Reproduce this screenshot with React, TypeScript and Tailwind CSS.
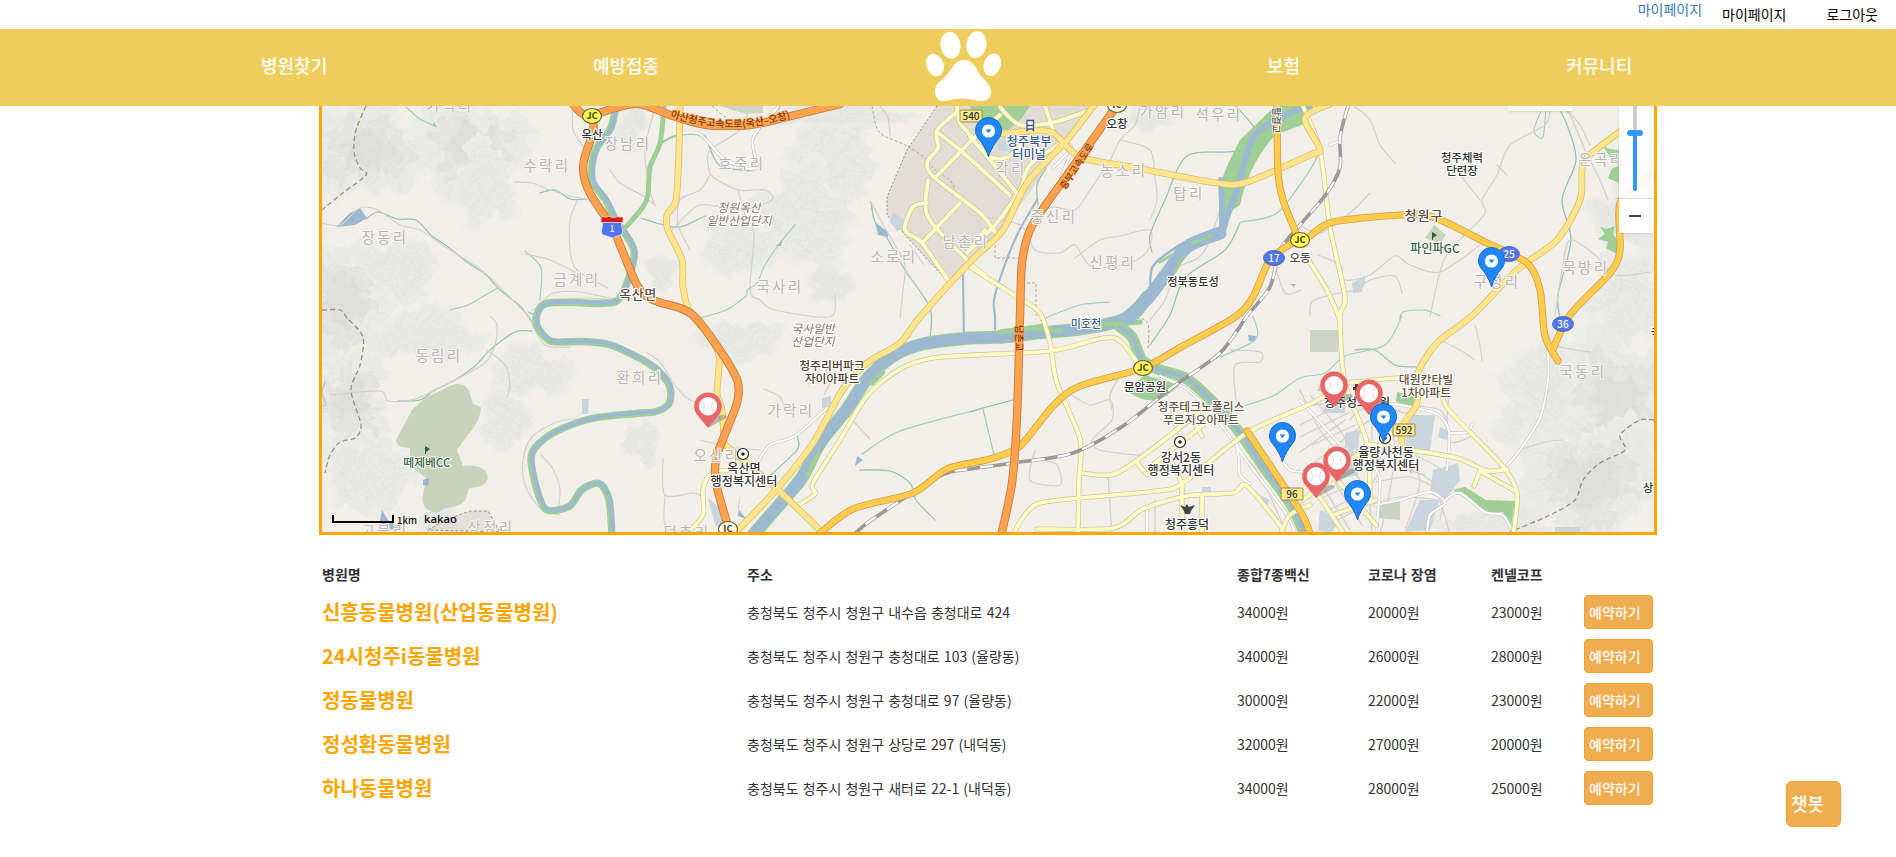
import React from "react";

type Pt = [number, number];

const villages: [string, number, number][] = [
  ["가덕리", 449, 106], ["장남리", 627, 144], ["수락리", 546, 166], ["장동리", 384, 238], ["금계리", 576, 280],
  ["호죽리", 741, 164], ["국사리", 779, 287], ["소로리", 893, 257], ["남촌리", 965, 242], ["각리", 1010, 169],
  ["농소리", 1123, 171], ["가암리", 1162, 112], ["석우리", 1218, 115], ["탑리", 1188, 194], ["중신리", 1053, 217],
  ["신평리", 1112, 263], ["은곡리", 1601, 160], ["묵방리", 1585, 268], ["구성리", 1496, 282], ["국동리", 1582, 372],
  ["동림리", 438, 356], ["환희리", 639, 378], ["가락리", 790, 411], ["오산리", 716, 456], ["상정리", 490, 528],
  ["고북리", 384, 531], ["덕촌리", 686, 533],
];

type Label = { t: string[]; x: number; y: number; c?: string; s?: number; i?: boolean; ls?: number };
const labels: Label[] = [
  { t: ["옥산"], x: 592, y: 134, s: 11.5 },
  { t: ["옥산면"], x: 638, y: 294, s: 13, ls: 0.6, c: "#5a4b44" },
  { t: ["청원옥산", "일반산업단지"], x: 739, y: 214, i: true, c: "#88706c", s: 11.8 },
  { t: ["국사일반", "산업단지"], x: 813, y: 335, i: true, c: "#88706c", s: 11.8 },
  { t: ["청주북부", "터미널"], x: 1029, y: 148, c: "#345a90", s: 12.2 },
  { t: ["오창"], x: 1117, y: 123, s: 11.5 },
  { t: ["정북동토성"], x: 1193, y: 281, s: 11.2 },
  { t: ["오동"], x: 1300, y: 257, s: 11.5, c: "#5a4b44" },
  { t: ["청주체력", "단련장"], x: 1462, y: 164, s: 11.4 },
  { t: ["청원구"], x: 1424, y: 215, s: 13, ls: 1, c: "#5a4b44" },
  { t: ["파인파GC"], x: 1435, y: 248, c: "#34663d", s: 12 },
  { t: ["떼제베CC"], x: 427, y: 462, c: "#34663d", s: 11.8 },
  { t: ["청주리버파크", "자이아파트"], x: 832, y: 372, c: "#4c4033", s: 11.9 },
  { t: ["옥산면", "행정복지센터"], x: 744, y: 475, s: 12.1 },
  { t: ["미호천"], x: 1086, y: 323, c: "#40648b", s: 11 },
  { t: ["문암공원"], x: 1145, y: 386, s: 11.4 },
  { t: ["청주테크노폴리스", "푸르지오아파트"], x: 1201, y: 413, c: "#63533f", s: 11.8 },
  { t: ["강서2동", "행정복지센터"], x: 1181, y: 464, s: 12.1 },
  { t: ["청주흥덕"], x: 1187, y: 524, s: 12 },
  { t: ["청주성모병원"], x: 1357, y: 402, s: 12 },
  { t: ["대원칸타빌", "1차아파트"], x: 1426, y: 386, c: "#63533f", s: 11.8 },
  { t: ["율량사천동", "행정복지센터"], x: 1386, y: 459, s: 12.1 },
  { t: ["상"], x: 1648, y: 487, s: 11.5 },
  { t: ["국"], x: 1656, y: 332, s: 11.5 },
];

/* cx, cy, rx, ry, seed, shade */
const hills: [number, number, number, number, number, number][] = [
  [370, 150, 75, 50, 1, 1], [470, 145, 65, 48, 2, 1], [485, 185, 30, 45, 13, 0], [345, 300, 48, 70, 3, 1],
  [400, 270, 40, 32, 4, 0], [350, 400, 42, 55, 5, 1], [425, 335, 60, 28, 6, 0], [530, 372, 46, 26, 7, 0],
  [505, 420, 26, 32, 8, 0], [370, 475, 50, 38, 9, 0], [629, 133, 15, 22, 10, 0], [835, 150, 44, 60, 11, 0],
  [800, 220, 55, 52, 12, 0], [738, 245, 40, 32, 14, 0], [662, 272, 16, 20, 15, 0], [740, 340, 46, 20, 16, 0],
  [642, 443, 20, 22, 17, 0], [1625, 215, 34, 36, 18, 0], [1625, 300, 40, 50, 19, 0], [1550, 400, 60, 50, 20, 0],
  [1615, 400, 65, 75, 21, 1], [1590, 480, 78, 68, 22, 1], [1545, 385, 30, 55, 23, 0], [1500, 525, 62, 20, 24, 0],
  [830, 115, 85, 12, 25, 0], [830, 285, 25, 20, 26, 0], [1150, 117, 24, 14, 27, 0], [638, 118, 8, 14, 28, 0],
  [440, 520, 22, 14, 31, 0],
];

function blob(cx: number, cy: number, rx: number, ry: number, seed: number, k: number) {
  const pts: string[] = [];
  const n = 160;
  for (let i = 0; i < n; i++) {
    const a = (i / n) * Math.PI * 2;
    const r = k * (0.9 + 0.14 * Math.sin(a * 3 + seed) + 0.12 * Math.sin(a * 5 + seed * 2.3));
    const x = cx + Math.cos(a) * rx * r;
    const y = cy + Math.sin(a) * ry * r;
    const m = Math.min(1, Math.min(rx, ry) / 40);
    const wx = 5 * Math.sin(y * 0.24 + seed) + 3.2 * Math.sin(y * 0.55 + x * 0.2) + 1.6 * Math.sin(y * 1.1 + seed * 3);
    const wy = 5 * Math.sin(x * 0.22 + seed * 1.7) + 3.2 * Math.sin(x * 0.5 - y * 0.25) + 1.6 * Math.sin(x * 1.05 + seed);
    pts.push(`${(x + wx * m).toFixed(1)},${(y + wy * m).toFixed(1)}`);
  }
  return pts.join(" ");
}

/* Catmull-Rom through the points, written as cubic segments */
function curve(s: string) {
  const p = s.split(" ").map((q) => q.split(",").map(Number) as Pt);
  let d = `M${p[0][0]} ${p[0][1]}`;
  for (let i = 0; i < p.length - 1; i++) {
    const a = p[i - 1] || p[i];
    const b = p[i];
    const c = p[i + 1];
    const e = p[i + 2] || c;
    d += `C${b[0] + (c[0] - a[0]) / 7} ${b[1] + (c[1] - a[1]) / 7} ${c[0] - (e[0] - b[0]) / 7} ${c[1] - (e[1] - b[1]) / 7} ${c[0]} ${c[1]}`;
  }
  return d;
}

const leftRiver =
  "617,105 612,127 598,147 593,165 594,182 607,200 617,220 628,236 635,250 633,267 625,290 617,301 600,303 577,302 553,302 542,306 537,318 540,329 553,341 583,341 610,344 643,359 660,371 671,387 670,403 657,411 637,413 593,418 557,431 537,446 532,459 537,486 547,509 570,506 583,489 600,483 610,499 613,535";
const miho =
  "1147,297 1135,313 1120,321 1080,329 1037,333 1003,337 970,338 923,344 893,356 867,379 847,409 820,443 803,476 787,496 753,535";
const mihoUp = "1310,106 1285,115 1255,135 1243,167 1237,190 1227,217 1220,233 1187,247 1167,273 1147,299";
const musim = "1120,327 1132,337 1142,360 1157,369 1187,379 1217,406 1237,429 1263,466 1290,503 1305,535";

const streams = [
  "366,219 378,212 397,219 416,220 432,236 447,246 468,263 485,274 500,290 520,306 532,322",
  "498,288 482,297 468,305 450,310", "532,331 515,332 490,350 475,366 455,380 435,390 420,400 398,401",
  "406,107 420,119 435,126", "540,193 555,190 570,199 586,199", "525,251 541,268 540,300",
  "705,135 718,164 741,170 754,168 754,138 780,107", "795,225 780,243 765,265 757,283 747,290 746,296 726,310 700,318",
  "871,202 875,222 887,238 905,270 930,308 930,340", "963,275 964,342", "641,218 660,224 680,227 705,216",
  "682,135 700,136 725,160 740,168", "1235,105 1258,135 1235,151 1187,156 1165,200 1150,235 1152,252",
  "1241,222 1277,213 1310,170 1320,150", "1240,223 1225,250 1185,278 1170,315 1150,345", "980,409 900,431 862,454",
  "860,470 890,471 910,483 916,500 935,520", "1220,412 1250,404 1275,395 1300,378 1325,373 1345,356 1385,345 1402,316",
  "1355,350 1375,350 1395,365 1417,367", "1546,105 1543,137 1534,130 1545,102", "1557,105 1567,125 1576,160 1562,200 1571,240 1558,295 1560,318",
  "1400,320 1403,312 1425,310 1440,316", "970,412 983,408 1013,400", "983,409 994,455", "797,436 797,450 765,480", "1253,316 1255,340 1203,364",
  "1046,168 1037,185 1038,205", "1045,318 1080,305 1110,302", "535,315 528,312", "325,382 322,393 326,405 322,405",
];

const minor = [
  "322,223 340,225 360,208 378,210 400,225 420,230 447,248 485,273 530,318", "540,305 553,293 580,292 610,298 640,300",
  "532,310 560,300 590,298 611,300", "577,201 570,220 570,250 577,270 608,288", "514,182 532,183 550,190 574,197 588,199",
  "610,170 620,183 645,197 655,205", "573,106 573,130 585,150 590,165", "525,254 550,260 575,272",
  "330,395 380,391 388,401 415,399 455,380 485,363 495,345 497,325 490,316", "487,350 505,365 510,385 507,397",
  "530,320 545,345 570,347", "655,206 650,190 645,150 655,108", "708,164 712,176 738,190 765,190 772,200 740,210 700,205 672,230",
  "710,175 700,190 680,200 678,225 690,250", "738,190 745,215 754,235 750,290 760,300 775,310 830,317 835,295",
  "750,107 740,130 710,150 708,165", "871,202 885,228 895,245 905,265 903,290 900,318", "910,245 924,265",
  "600,418 560,421 532,437 523,460 525,485 540,508 560,515", "541,455 553,469 560,490 558,510", "646,352 660,362 675,385 690,400 716,406",
  "663,458 665,495 694,493 705,500", "665,495 664,520 670,534", "700,440 730,447 760,450", "757,463 770,445 795,436 827,408",
  "764,389 780,397 785,410", "820,360 830,380 824,395", "843,410 870,439", "920,342 980,334 1030,332", "880,106 888,118 890,135",
  "1140,106 1135,125 1120,140 1110,160 1090,190 1075,210 1052,207 1037,218", "1120,140 1150,150 1155,178 1157,200 1150,220",
  "970,215 1020,225 1035,250 1060,253 1075,245 1092,267 1130,263 1148,250 1150,230 1120,236 1100,240 1075,258", "1295,107 1270,118 1235,170 1205,250 1178,268 1165,300 1150,320",
  "1355,107 1370,120 1380,145 1395,163", "1550,107 1545,125 1510,145 1497,175 1482,200 1484,215 1450,250 1440,272 1430,316",
  "1370,193 1350,213 1320,233 1300,225", "1318,255 1340,265 1345,280 1370,275 1395,256 1410,265 1440,272 1480,245",
  "1310,316 1312,302 1330,295 1355,290 1370,280 1395,276 1402,293", "1460,175 1480,200", "1497,165 1507,175", "1560,107 1570,115 1585,150 1600,180 1608,200",
  "1565,107 1580,125 1590,145", "1555,316 1562,270 1570,240 1595,255 1615,275 1650,272", "1230,350 1260,352 1260,362 1235,365 1236,400", "1301,290 1285,293 1273,260",
  "1073,396 1090,405 1110,400 1112,420 1092,440 1100,450 1140,455 1150,450", "1035,450 1030,480 1060,485 1057,465 1043,460", "1120,375 1110,395 1112,410",
  "1108,475 1112,535", "1238,450 1260,475 1285,530", "1155,500 1155,535", "1170,405 1175,430 1190,440",
  "1350,420 1360,410 1380,405 1400,412 1430,418", "1305,406 1350,400", "1310,395 1340,430 1348,445", "1300,425 1335,408 1360,400",
  "1300,390 1320,430 1345,460 1360,480", "1305,470 1370,420 1400,410", "1300,452 1345,420", "1325,475 1365,445",
  "1370,470 1400,467 1430,480 1440,500 1450,535", "1375,482 1410,477 1440,490", "1380,450 1380,470 1370,490 1372,535",
  "1390,420 1395,450 1390,490 1380,535", "1400,450 1420,480 1405,530", "1415,455 1445,475 1440,520", "1370,505 1400,497 1440,500",
  "1318,500 1350,485", "1325,512 1365,492", "1330,524 1370,503", "1325,490 1350,530", "1335,483 1362,525",
  "1350,437 1365,430", "1300,437 1350,412", "1312,445 1355,425", "1372,415 1372,440", "1385,410 1388,440",
  "1450,380 1448,440 1475,435", "1405,440 1400,465 1425,475", "1520,450 1545,442 1563,440", "1475,325 1480,345 1482,361", "1440,340 1460,350 1475,360",
  "1550,345 1575,350 1590,352", "1450,433 1440,410 1400,405",
];

const whiteRoads = [
  "682,133 700,134 722,157 745,168 757,166 753,138 778,107", "757,463 770,445 795,436 827,408", "1548,350 1548,380 1540,418 1520,450 1505,468",
  "1160,376 1185,388 1205,406 1225,430 1250,465 1285,512 1296,535", "1237,445 1239,460 1240,475 1250,484",
  "1375,403 1400,405 1437,414 1449,432 1447,470", "1449,433 1468,432 1472,424", "1375,505 1400,500 1430,492 1445,503 1430,515 1427,535",
  "1445,500 1460,493 1485,512 1503,515 1512,530", "1147,510 1147,535", "1372,465 1380,480 1376,535", "1282,460 1290,470 1305,472", "1300,400 1345,450",
  "1053,168 1071,148 1062,145 1045,165", "1062,175 1072,150", "1330,145 1340,141",
];

const pale = [
  "980,355 933,358 900,369 867,396 840,440 813,483 815,494 797,506", "970,355 1050,351 1103,338 1120,341 1140,366",
  "970,267 1017,297 1040,313 1050,343 1057,383 1080,439 1079,480 1078,535", "1082,473 1117,473 1173,433 1203,409",
  "1013,535 1020,522 1037,504 1080,498 1157,491 1183,483 1247,433 1310,404 1335,390", "1037,529 1113,528 1143,509 1187,496 1233,493 1247,486 1283,529",
  "1182,483 1182,535", "1202,496 1202,535", "1168,455 1182,483", "1137,462 1147,474 1158,470", "1203,425 1150,467", "1173,433 1190,420 1202,436",
  "1303,106 1320,150 1330,227 1345,297 1340,317 1345,383 1367,443 1370,503", "1305,255 1327,290 1340,320", "1367,444 1403,449 1457,458 1487,471 1507,469",
  "1347,383 1400,378 1437,383 1448,409 1500,463 1517,493 1513,535", "1480,471 1515,491", "1480,471 1474,486", "1295,505 1330,480 1367,445", "1315,490 1345,535",
  "1333,475 1376,525", "1333,515 1376,500", "1280,535 1290,515 1310,505",
  "957,106 960,123 970,135 1020,197", "957,112 937,130 938,148 927,163 935,178 980,213 995,232", "937,132 960,150 1010,195", "935,178 980,132 1000,115",
  "928,180 928,217 970,263 985,275", "927,203 913,207 905,230 922,243 950,283", "922,243 960,203", "967,253 985,230", "970,137 990,157 1008,157 1020,145",
  "1066,140 1030,165 1020,190 995,225 970,250", "1000,107 1020,125 1055,122 1090,110", "1045,106 1053,130", "728,470 710,475 703,490 703,515 688,532",
];

const yellow = [
  "680,106 679,150 676,200 667,215 668,230 682,260 683,287 690,313 707,333 719,356 717,393 722,410 724,440",
  "1095,104 1067,140 1027,183 1003,230 970,262 920,317 900,343 867,363 843,389 813,443 777,489 735,533",
  "1003,134 1030,131 1053,133 1080,157 1137,168 1217,183 1247,182 1310,155 1320,149 1305,118 1330,104",
  "1630,124 1587,157 1582,170 1580,200 1557,240 1517,270 1473,315 1437,343 1418,373 1417,403 1403,426 1402,453",
  "723,443 777,489 825,535",
];

const amber = [
  "1277,105 1278,173 1283,200 1297,235", "1310,236 1333,222 1400,215 1433,217 1487,243 1527,263 1540,290 1545,336 1558,361",
  "1656,172 1621,200 1620,250 1610,273 1570,315 1553,349", "1297,240 1270,260 1253,297 1235,317 1183,346 1143,368 1080,386 1053,406 1020,446 990,459 947,469 913,493 853,509 818,535",
  "1247,431 1277,476 1303,516 1312,540",
];

const orange = [
  "573,104 580,112 592,120 593,132 584,160 584,177 592,197 612,227 622,250 638,287 653,300 680,308 694,316 710,336 730,366 738,383 737,403 723,439 716,459 716,483 729,530",
  "592,116 615,108 640,104 673,116 707,125 750,125 787,117 840,104",
  "1118,104 1083,153 1047,203 1030,230 1022,263 1020,316 1017,416 1012,483 1001,536",
];

const rail =
  "1348,106 1340,137 1340,167 1327,193 1300,225 1280,250 1270,287 1247,316 1220,353 1170,389 1123,426 1073,453 1013,463 970,469 940,476 873,519 853,535";

const parcels = [
  "966,235 976,242 970,252 959,244", "893,212 905,220 898,232 890,222", "1005,140 1014,140 1014,151 998,151 998,143", "1352,283 1365,276 1365,283 1362,292 1353,293",
  "1410,415 1435,415 1430,450 1405,450", "1345,433 1360,430 1358,450 1345,448", "1325,455 1353,448 1358,475 1335,480", "1433,470 1458,463 1460,480 1445,500 1430,494",
  "1420,500 1440,500 1430,530 1405,532", "1320,510 1340,520 1330,535 1318,530", "1260,495 1270,500 1266,508", "708,498 722,510 725,530 715,525", "1555,527 1580,527 1580,535 1555,535",
  "582,399 589,399 588,414 582,414", "822,398 831,396 831,408 822,408", "1202,487 1211,487 1211,494 1202,494", "1325,404 1345,400 1345,413 1323,413", "1440,427 1448,430 1446,440 1438,437",
];

function Strokes({ list, w, c, cap = "round" }: { list: string[]; w: number; c: string; cap?: "round" | "butt" }) {
  return (
    <g fill="none" stroke={c} strokeWidth={w} strokeLinecap={cap} strokeLinejoin="round">
      {list.map((s) => (
        <path key={s} d={curve(s)} />
      ))}
    </g>
  );
}

function Shield({ x, y, n }: { x: number; y: number; n: string }) {
  return (
    <g>
      <ellipse cx={x} cy={y} rx="10.5" ry="7.5" fill="#5276e8" stroke="#3f57b5" strokeWidth="0.8" />
      <text x={x} y={y + 3.6} fontSize="10" fontWeight="500" textAnchor="middle" fill="#fff">{n}</text>
    </g>
  );
}

function Plate({ x, y, n }: { x: number; y: number; n: string }) {
  return (
    <g>
      <rect x={x - 11} y={y - 6} width="22" height="12" rx="1" fill="#f8e98c" stroke="#a88c3d" />
      <text x={x} y={y + 3.7} fontSize="10" fontWeight="500" textAnchor="middle" fill="#333">{n}</text>
    </g>
  );
}

function Junction({ x, y, white, t = "JC" }: { x: number; y: number; white?: boolean; t?: string }) {
  return (
    <g>
      <ellipse cx={x} cy={y} rx="9.5" ry="7.5" fill={white ? "#fffbe8" : "#fcf951"} stroke="#6d633c" strokeWidth="1.2" />
      <text x={x} y={y + 3.4} fontSize="9.5" fontWeight="700" textAnchor="middle" fill="#4a4028">{t}</text>
    </g>
  );
}

function Office({ x, y }: { x: number; y: number }) {
  return (
    <g>
      <circle cx={x} cy={y} r="5.5" fill="#fff" stroke="#222" strokeWidth="1.2" />
      <circle cx={x} cy={y} r="1.8" fill="#222" />
    </g>
  );
}

function Flag({ x, y }: { x: number; y: number }) {
  return <path d={`M${x} ${y + 8}V${y}L${x + 5} ${y + 3}L${x + 1} ${y + 6}V${y + 8}Z`} fill="#2b6134" />;
}

function BluePin({ x, y }: { x: number; y: number }) {
  return (
    <g transform={`translate(${x} ${y})`}>
      <path d="M0 0C-1.2-5-3-8-7-14.500C-10-18.500-13-21-13-26.500A13 13 0 0 1 13-26.500C13-21 10-18.500 7-14.500C3-8 1.200-5 0 0Z" fill="#1f87f8" stroke="#1667c4" strokeWidth="1" />
      <circle cy="-26" r="6.600" fill="#fff" />
      <path d="M-3-27.500H3L0-23.800Z" fill="#1f87f8" />
    </g>
  );
}

function RedPin({ x, y }: { x: number; y: number }) {
  return (
    <g transform={`translate(${x} ${y})`}>
      <path d="M0 0L18-10C22-14 10-14 6-10Z" fill="#5b6b5b" opacity=".4" />
      <path d="M0 0L-11.500-14A13.800 13.800 0 1 1 11.500-14Z" fill="#e96667" />
      <circle cy="-21.700" r="9.200" fill="#fff" />
      <path d="M-6.300-28C-2.800-24-2.800-19-6.300-15.500M6.300-28C2.800-24 2.800-19 6.300-15.500" fill="none" stroke="#efb5b5" strokeWidth="1" strokeDasharray="1.500 1" />
    </g>
  );
}

function MapCanvas() {
  return (
    <svg viewBox="322 106 1332 426" className="block h-[426px] w-[1332px]">
      <rect x="322" y="106" width="1332" height="426" fill="#f2efe9" />
      {hills.map(([cx, cy, rx, ry, s, dark]) => (
        <g key={s}>
          <polygon points={blob(cx, cy, rx, ry, s, 1.08)} fill="#edede8" />
          <polygon points={blob(cx, cy, rx, ry, s, 0.94)} fill="#eaebe6" stroke="#e5e7e2" strokeWidth=".7" />
          <polygon points={blob(cx, cy, rx, ry, s, 0.8)} fill="none" stroke="#e2e4df" strokeWidth=".8" />
          <polygon points={blob(cx, cy, rx, ry, s, 0.66)} fill={dark ? "#e3e4df" : "#e9eae5"} stroke="#dfe2dd" strokeWidth=".8" />
          <polygon points={blob(cx, cy, rx, ry, s, 0.52)} fill="none" stroke={dark ? "#ebece8" : "#e1e4df"} strokeWidth=".8" />
          <polygon points={blob(cx, cy, rx, ry, s, 0.38)} fill={dark ? "#dedfda" : "none"} stroke="#dfe1dc" strokeWidth=".8" />
          <polygon points={blob(cx, cy, rx, ry, s, 0.22)} fill="none" stroke="#e2e4df" strokeWidth=".8" />
        </g>
      ))}

      <path d="M937 106L907 150L887 197V215L950 284L1003 230L1067 140L1093 106Z" fill="#e1ddd5" />
      <path d="M937 106L907 150L887 197V215L950 284" fill="none" stroke="#9a8a78" strokeDasharray="2 2" />
      <path d="M970 106H1030L1022 118L1008 130L980 128Z" fill="#9fce96" />
      <path d="M450 386C458 382 468 384 470 394L473 404L481 407C480 425 468 433 457 450L463 466C480 464 490 470 487 481C482 488 476 486 468 489C468 504 458 507 445 508L437 513C425 511 421 504 423 495L426 478L410 465V448C402 448 396 446 396 440L412 410L425 398Z" fill="#c8d3bc" />
      <path d="M720 106H763V113L745 114Z" fill="#cdd6c2" />
      <path d="M428 530L445 520L470 511H488L500 532Z" fill="#e2ded8" stroke="#a08f7a" strokeDasharray="3 2" />
      <path d="M1310 330H1338V352H1310Z" fill="#cfd5c4" />
      <path d="M1425 238L1434 225L1446 235L1440 243Z" fill="#c8d3bc" />
      <path d="M1320 385L1335 380V393L1317 391Z" fill="#c5d1bb" />
      <path d="M1378 502H1400V520L1378 518Z" fill="#c9d3c2" />
      <path d="M1127 390C1140 402 1157 404 1170 393L1180 385L1145 375Z" fill="#9fce96" />
      <path d="M1397 392L1415 396L1413 406L1396 402Z" fill="#9fce96" />
      <path d="M1453 490L1465 487L1486 500L1515 501L1511 528L1503 512L1485 512Z" fill="#9fce96" />
      <path d="M1603 146L1610 149L1619 150V183L1608 178L1612 168L1619 166L1612 160ZM1600 227L1607 229L1615 226L1613 234L1617 240V254L1606 248L1608 242L1598 239L1605 234Z" fill="#9fce96" />
      <path d="M1407 464H1416L1411 474Z" fill="#9fce96" />
      {parcels.map((p) => (
        <polygon key={p} points={p} fill="#cad6de" />
      ))}
      <path d="M360 208L367 218L355 225L336 227L350 213ZM434 122L437 127L433 126ZM875 222L888 232V237L878 235ZM776 246L783 239L781 246ZM423 480L429 478L428 486L423 485ZM382 510L388 520L400 528L378 532ZM1248 335L1256 336L1255 341L1249 341ZM1290 284L1296 284L1294 287ZM857 456L863 460L855 466ZM740 494L738 508L746 519L738 516Z" fill="#9cb9d1" />

      <Strokes list={streams} w={1.2} c="#a3cfb8" />
      <Strokes list={streams.filter((_, i) => i % 2 === 0)} w={0.6} c="#8fb4c0" />
      <Strokes list={["1037,200 1018,233 1003,270 994,300 995,316 995,330"]} w={2.2} c="#9cb9d1" />
      <Strokes list={["963,275 964,342"]} w={2} c="#9cb9d1" />
      <Strokes list={minor} w={1.2} c="#d2d0ce" />
      <g fill="none" stroke="#9a9176" strokeWidth="1.300" strokeDasharray="5 3">
        <path d={curve("366,106 356,130 354,152 360,168 366,175 340,195 322,210")} />
        <path d={curve("322,310 340,310 347,318 363,337 360,365 351,390 361,425 355,438 340,442 330,455 325,473")} />
        <path d={curve("1654,420 1640,420 1620,435 1625,450 1600,463 1583,480 1575,500 1550,515 1510,532")} />
      </g>
      <g fill="none" stroke="#b5a893" strokeDasharray="3 2">
        <path d={curve("712,106 730,120 755,126")} />
        <path d={curve("872,106 879,132 905,145 925,158 935,170 950,180 955,190")} />
        <path d="M995 240V258H1020V283H1036V316" />
        <path d={curve("1040,320 1060,335 1100,320 1145,320 1148,350")} />
      </g>

      <g transform="translate(-1 0.500)">
        <Strokes list={[leftRiver]} w={7.4} c="#9fce96" />
      </g>
      <Strokes list={[leftRiver]} w={4} c="#9cb9d1" />
      <Strokes list={["626,227 643,207 648,195 650,167 660,143 664,107"]} w={5} c="#9fce96" />
      <Strokes list={["660,144 672,137 682,135"]} w={2} c="#9fce96" />
      <path d="M1310 106H1275L1240 140C1230 160 1218 180 1220 200L1225 215L1240 205C1248 170 1262 150 1275 135L1310 122Z" fill="#9fce96" />
      <Strokes list={[miho]} w={13} c="#9fce96" />
      <Strokes list={[miho]} w={11} c="#9cb9d1" />
      <Strokes list={["1045,326 1000,332", "1140,322 1090,326", "1060,331 1035,329", "883,372 872,383", "818,455 808,475"]} w={5} c="#9fce96" />
      <Strokes list={[mihoUp]} w={6} c="#9cb9d1" />
      <Strokes list={["1220,233 1187,247 1167,273 1147,299 1125,320"]} w={13} c="#9cb9d1" />
      <Strokes list={["1221,180 1222,205 1222,230"]} w={6} c="#9cb9d1" />
      <Strokes list={["1210,237 1190,240 1165,255 1152,268 1150,290"]} w={2.5} c="#9cb9d1" />
      <Strokes list={["1212,236 1192,243", "1160,262 1172,255", "1182,258 1175,272"]} w={3} c="#9fce96" />
      <Strokes list={[musim]} w={11} c="#9fce96" />
      <Strokes list={[musim]} w={4.5} c="#9cb9d1" />

      <Strokes list={whiteRoads} w={3.2} c="#c9c7c5" />
      <Strokes list={whiteRoads} w={2} c="#ffffff" />
      <Strokes list={pale} w={5.2} c="#cbc7a4" />
      <Strokes list={pale} w={3.7} c="#fffbc6" />
      <Strokes list={yellow} w={6.8} c="#d9bd70" />
      <Strokes list={yellow} w={5.2} c="#ffe68c" />
      <Strokes list={[rail]} w={3.6} c="#999999" cap="butt" />
      <path d={curve(rail)} fill="none" stroke="#fff" strokeWidth="2.200" strokeDasharray="13 13" />
      <Strokes list={amber} w={7.2} c="#cba050" />
      <Strokes list={amber} w={5.6} c="#ffcb4b" />
      <Strokes list={orange} w={8.4} c="#bd8048" />
      <Strokes list={orange} w={6.6} c="#ffa14d" />

      <g textAnchor="middle" paintOrder="stroke" stroke="#f6f4f0" strokeWidth="2" strokeLinejoin="round">
        {villages.map(([t, x, y]) => (
          <text key={t} x={x + 1} y={y + 5} fontSize="14.500" letterSpacing="2.400" fill="#b7b7b7">{t}</text>
        ))}
      </g>
      <g textAnchor="middle" paintOrder="stroke" stroke="#fff" strokeWidth="2.200" strokeLinejoin="round">
        {labels.map((l) => (
          <text key={l.t[0] + l.x} fontSize={l.s} fontStyle={l.i ? "italic" : "normal"} fontWeight={l.i ? 400 : 500} letterSpacing={l.ls ?? 0} fill={l.c ?? "#333"}>
            {l.t.map((s, i) => (
              <tspan key={s} x={l.x} y={l.y + (i - (l.t.length - 1) / 2) * 13.6 + 4.5}>{s}</tspan>
            ))}
          </text>
        ))}
      </g>
      <defs>
        <path id="road-a" d="M670 117Q735 138 792 117" />
        <path id="road-b" d="M1065 190L1101 135" />
      </defs>
      <g fontSize="10" fontWeight="500" fill="#7a3d12" paintOrder="stroke" stroke="#ffa14d" strokeWidth="1.500">
        <text><textPath href="#road-a">아산청주고속도로(옥산–오창)</textPath></text>
        <text fontSize="9.500"><textPath href="#road-b">중부고속도로</textPath></text>
        <text transform="translate(1016 325) rotate(90)" fontSize="9.500">남촌교</text>
        <text transform="translate(1273 107) rotate(90)" fontSize="9.500" fill="#555" stroke="#fff">팔결교</text>
      </g>

      <Junction x={592} y={116} />
      <Junction x={1143} y={368} />
      <Junction x={1300} y={240} />
      <Junction x={728} y={529} white t="IC" />
      <Junction x={1117} y={105} white t="IC" />
      <path d="M601 223V218C603 215 605 219 609 216C612 218 615 218 618 216C619 219 622 215 623 218V223Z" fill="#d51c12" stroke="#fff" strokeWidth=".6" />
      <path d="M602 222.500H622C620 226 625 231 621 235Q617 236 612 238Q607 236 603 235C599 231 604 226 602 222.500Z" fill="#5276e8" stroke="#fff" strokeWidth=".6" />
      <text x="612" y="232" fontSize="9" textAnchor="middle" fill="#fff">1</text>
      <Shield x={1274} y={258} n="17" />
      <Shield x={1509} y={254} n="25" />
      <Shield x={1563} y={324} n="36" />
      <Plate x={971} y={116} n="540" />
      <Plate x={1292} y={494} n="96" />
      <Plate x={1404} y={430} n="592" />
      <Office x={743} y={454} />
      <Office x={1180} y={442} />
      <Office x={1385} y={438} />
      <Flag x={425} y={446} />
      <Flag x={1432} y={232} />
      <path d="M1027 120.500H1033.500V129H1027ZM1027 125.500H1033.500M1026.500 131L1028 129M1034 131L1032.500 129" fill="#fff" stroke="#345a90" strokeWidth="1.300" />
      <path d="M1180 505L1185 507L1187 504L1189 507L1195 505L1191 511L1190 514H1185L1184 511Z" fill="#444" />
      <path d="M1353 387H1360V390H1353ZM1355 384H1358V395H1355Z" fill="#444" />

      <RedPin x={708} y={428} />
      <RedPin x={1334} y={407} />
      <RedPin x={1369} y={415} />
      <RedPin x={1337} y={482} />
      <RedPin x={1316} y={498} />
      <BluePin x={988.5} y={157} />
      <BluePin x={1491.5} y={287} />
      <BluePin x={1282.5} y={462} />
      <BluePin x={1383.5} y={443} />
      <BluePin x={1357.5} y={520} />

      <path d="M333 515V522H393V515" fill="none" stroke="#000" strokeWidth="2" />
      <text x="397" y="524" fontSize="9.500" fontWeight="500" fill="#111">1km</text>
      <text x="424" y="523" fontSize="11.500" fontWeight="600" fill="#111" fontFamily="'Open Sans', sans-serif" textLength="33" lengthAdjust="spacingAndGlyphs">kakao</text>
    </svg>
  );
}

const hospitals = [
  ["신흥동물병원(산업동물병원)", "충청북도 청주시 청원구 내수읍 충청대로 424", "34000원", "20000원", "23000원"],
  ["24시청주i동물병원", "충청북도 청주시 청원구 충청대로 103 (율량동)", "34000원", "26000원", "28000원"],
  ["정동물병원", "충청북도 청주시 청원구 충청대로 97 (율량동)", "30000원", "22000원", "23000원"],
  ["정성환동물병원", "충청북도 청주시 청원구 상당로 297 (내덕동)", "32000원", "27000원", "20000원"],
  ["하나동물병원", "충청북도 청주시 청원구 새터로 22-1 (내덕동)", "34000원", "28000원", "25000원"],
];

const rowGrid = "grid grid-cols-[425px_490px_131px_123px_93px_69px] items-center pl-[3px] [word-spacing:1px]";

export default function App() {
  return (
    <div className="relative h-[857px] overflow-hidden bg-white font-['Noto_Sans_CJK_KR',sans-serif] text-sm text-[#333]">
      <div className="flex h-[29px] items-start justify-end pr-[18px] leading-[18px]">
        <a className="mr-5 text-[#337ab7]">마이페이지</a>
        <a className="mr-10 mt-[5px] text-black">마이페이지</a>
        <a className="mt-[5px] text-black">로그아웃</a>
      </div>

      <nav className="grid h-[77px] grid-cols-[332px_333px_340px_300px_1fr] items-center bg-[#efcd5c] pb-[5px] pl-[261px] text-lg font-medium text-white">
        <a>병원찾기</a>
        <a>예방접종</a>
        <svg viewBox="926 31 75 70" className="mt-[2px] h-[70px] w-[75px]" fill="#fff">
          <ellipse cx="935" cy="65" rx="8.500" ry="11.500" transform="rotate(-20 935 65)" />
          <ellipse cx="950.500" cy="45.300" rx="10" ry="13.500" transform="rotate(-8 950.5 45.3)" />
          <ellipse cx="976.500" cy="44.500" rx="10" ry="13.500" transform="rotate(8 976.5 44.5)" />
          <ellipse cx="992.300" cy="64.700" rx="8.500" ry="11.500" transform="rotate(20 992.3 64.7)" />
          <path d="M964 60C974 60 976 69 981 76C986 82 991 85 991 92C991 98 987 101 981 101C975 101 971 98.500 962 98.500C954 98.500 949 101 943 101C938 101 935 97 935 91C935 84 941 81 946 76C952 69 955 60 964 60Z" />
        </svg>
        <a className="pl-px">보험</a>
        <a>커뮤니티</a>
      </nav>

      <main className="ml-[319px] w-[1338px]">
        <section className="relative overflow-hidden border-x-[3px] border-b-[3px] border-[#ffa500]">
          <MapCanvas />
          <div className="absolute right-[81px] top-0 h-[5px] w-[65px] bg-white shadow-sm" />
          <div className="absolute right-0 top-0 flex w-[35px] flex-col rounded-b-sm bg-white/90 shadow">
            <div className="flex h-[92px] flex-col items-center pr-[3px]">
              <div className="h-6 w-1 bg-[#ccc]" />
              <div className="h-1.5 w-4 shrink-0 rounded-sm bg-[#3396ff]" />
              <div className="h-[55px] w-1 rounded-b-sm bg-[#3396ff]" />
            </div>
            <div className="flex h-[35px] items-center justify-center border-t border-[#ddd] bg-white pr-[3px]">
              <div className="h-0.5 w-3 bg-[#444]" />
            </div>
          </div>
        </section>

        <section className="pt-[29px]">
          <div className={`${rowGrid} h-5 font-bold`}>
            <span>병원명</span>
            <span>주소</span>
            <span>종합7종백신</span>
            <span>코로나 장염</span>
            <span>켄넬코프</span>
          </div>
          <div className="pt-1.5">
            {hospitals.map(([name, address, combo, corona, kennel]) => (
              <div key={name} className={`${rowGrid} h-11`}>
                <a className="text-xl font-bold text-[#ffa500]">{name}</a>
                <span>{address}</span>
                <span>{combo}</span>
                <span>{corona}</span>
                <span>{kennel}</span>
                <button className="h-[34px] rounded border border-[#eea236] bg-[#f0ad4e] pl-1 text-left font-medium text-white">예약하기</button>
              </div>
            ))}
          </div>
        </section>
      </main>

      <button className="absolute left-[1786px] top-[781px] h-[46px] w-[55px] rounded-md border border-[#eea236] bg-[#f0ad4e] pb-0.5 pl-1 text-left text-lg font-medium text-white">
        챗봇
      </button>
    </div>
  );
}
